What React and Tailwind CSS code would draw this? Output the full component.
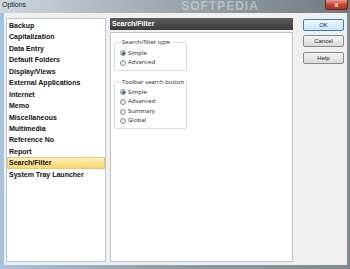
import React from 'react'

const sections = [
  'Backup',
  'Capitalization',
  'Data Entry',
  'Default Folders',
  'Display/Views',
  'External Applications',
  'Internet',
  'Memo',
  'Miscellaneous',
  'Multimedia',
  'Reference No',
  'Report',
  'Search/Filter',
  'System Tray Launcher',
]

function Radio({ label, checked }) {
  return (
    <div className="flex items-center gap-[2px]">
      <span className="flex h-[6px] w-[6px] items-center justify-center rounded-full border border-[#8e8f8f] bg-gradient-to-br from-[#d8d8d8] to-[#ffffff]">
        {checked && <span className="h-[3px] w-[3px] rounded-full bg-[#1f5fa8]" />}
      </span>
      <span>{label}</span>
    </div>
  )
}

function Group({ title, options, className }) {
  return (
    <fieldset className={`w-[73px] rounded-[2px] border border-[#d5dfe5] pl-[5px] ${className}`}>
      <legend className="ml-[1px] whitespace-nowrap px-[1px] leading-[8px] text-[#1e1e1e]">{title}</legend>
      {options.map((o, i) => (
        <div key={o} className="leading-[9.6px]">
          <Radio label={o} checked={i === 0} />
        </div>
      ))}
    </fieldset>
  )
}

function Button({ children, primary }) {
  return (
    <button
      className={`block h-[12px] w-[41px] rounded-[2px] border text-[6px] leading-[10px] text-[#1e1e1e] ${
        primary
          ? 'border-[#3c7fb1] bg-gradient-to-b from-[#eef8fe] to-[#c6e6fa]'
          : 'border-[#8a8a8a] bg-gradient-to-b from-[#f4f4f4] to-[#dadada]'
      }`}
    >
      {children}
    </button>
  )
}

export default function App() {
  return (
    <div
      className="flex h-[269px] w-[350px] flex-col overflow-hidden bg-gradient-to-r from-[#a9c3dc] via-[#8f9aa2] to-[#7e8a90]"
      style={{ fontFamily: '"Liberation Sans", Arial, sans-serif' }}
    >
      {/* Title bar */}
      <div className="relative flex h-[13px] items-start bg-gradient-to-r from-[#cdd7e1] via-[#9aa5ad] to-[#6e7a80]">
        <span className="ml-[2px] mt-[1px] text-[7px] leading-[8px] text-[#1a1a1a]">Options</span>
        <span className="ml-[155px] text-[12px] font-bold leading-[12px] tracking-[1px] text-white/40">SOFTPEDIA</span>
        <div className="ml-auto mr-[2px] flex h-[10px] w-[23px] items-center justify-center rounded-b-[3px] border border-t-0 border-[#5a2a24] bg-gradient-to-b from-[#e39a8a] via-[#c9462f] to-[#b13420]">
          <span className="text-[7px] font-bold leading-[8px] text-white">x</span>
        </div>
      </div>

      {/* Client area */}
      <div className="mx-[4px] mb-[4px] mr-[3px] flex flex-1 bg-[#f0f0f0] pb-[3px] pl-[2px] pt-[5px]">
        {/* Section list */}
        <div className="w-[100px] border border-[#b8c6d6] bg-white pt-[1px] text-[7px] font-bold text-[#111]">
          {sections.map((s) =>
            s === 'Search/Filter' ? (
              <div
                key={s}
                className="h-[11.45px] border border-[#e8c870] bg-gradient-to-b from-[#fdf0b8] to-[#f9d668] pl-[1px] leading-[9.45px]"
              >
                {s}
              </div>
            ) : (
              <div key={s} className="h-[11.45px] pl-[2px] leading-[11.45px]">
                {s}
              </div>
            )
          )}
        </div>

        {/* Page */}
        <div className="ml-[4px] flex w-[183px] flex-col">
          <div className="h-[12px] bg-gradient-to-b from-[#5e5e5e] to-[#3a3a3a] pl-[2px] text-[7px] font-bold leading-[12px] text-white">
            Search/Filter
          </div>
          <div
            className="mt-[2px] flex-1 border border-[#c2c2c2] bg-white pl-[3px] pt-[5px] text-[6px] text-[#1e1e1e]"
            style={{ fontFamily: '"Open Sans", "Noto Sans", sans-serif' }}
          >
            <Group title="Search/filter type" options={['Simple', 'Advanced']} className="pb-[2px] pt-[2.5px]" />
            <Group
              title="Toolbar search button"
              options={['Simple', 'Advanced', 'Summary', 'Global']}
              className="mt-[7px] pb-[1.5px] pt-[2px]"
            />
          </div>
        </div>

        {/* Buttons */}
        <div className="ml-[10px] flex flex-col pt-[1px]">
          <Button primary>OK</Button>
          <div className="mt-[4px]">
            <Button>Cancel</Button>
          </div>
          <div className="mt-[5px]">
            <Button>Help</Button>
          </div>
        </div>
      </div>
    </div>
  )
}
